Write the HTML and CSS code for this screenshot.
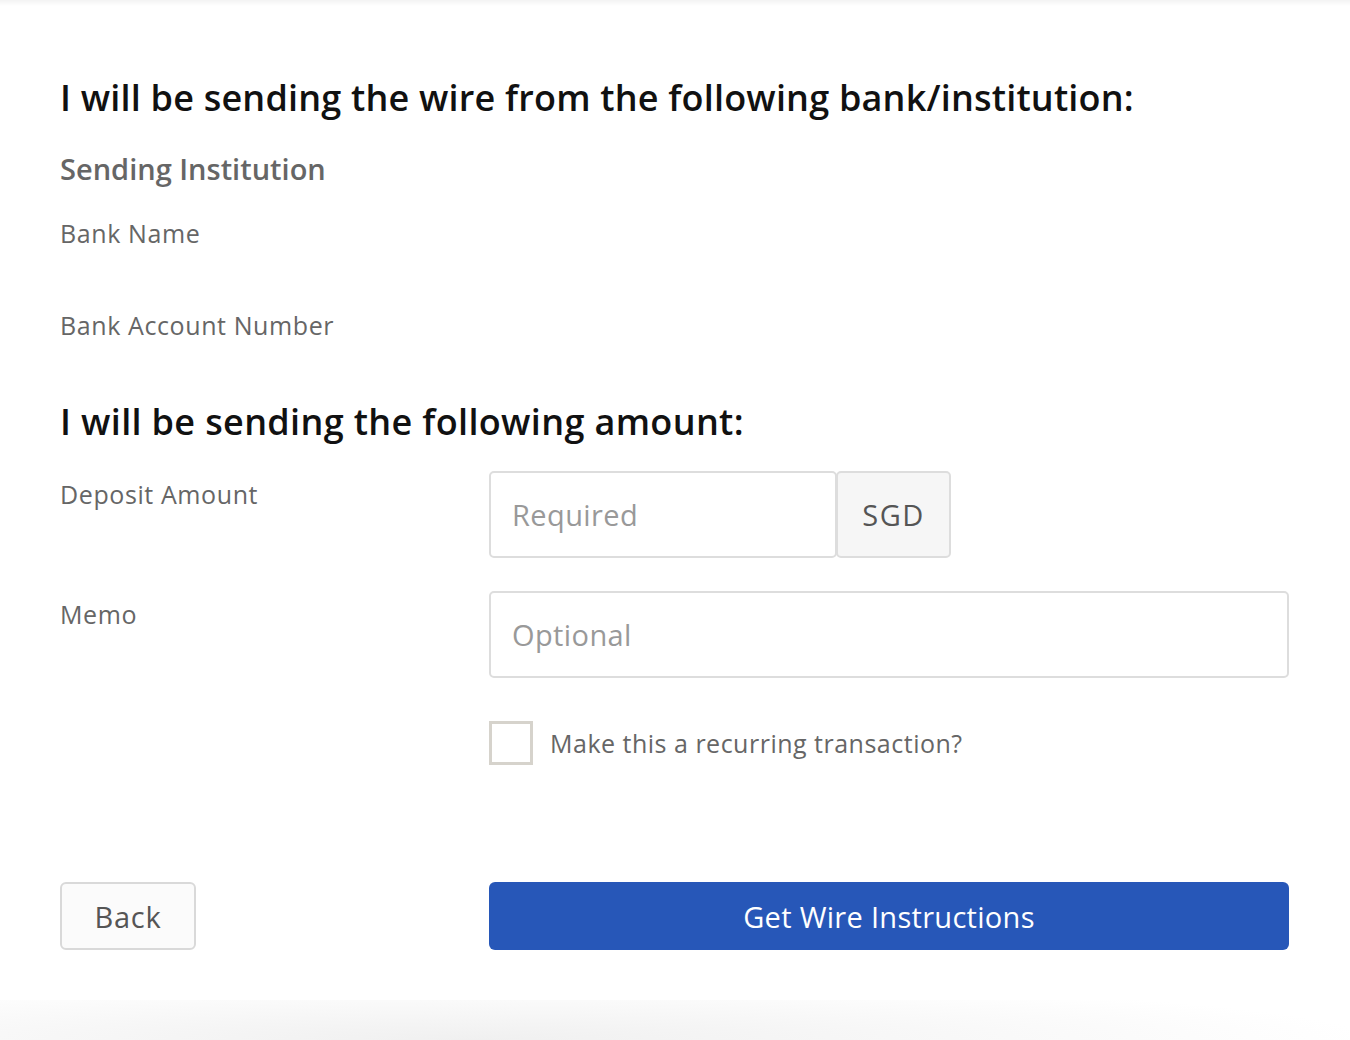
FILE: index.html
```html
<!DOCTYPE html>
<html lang="en">
<head>
<meta charset="utf-8">
<title>Wire Deposit</title>
<link rel="stylesheet" href="styles.css">
</head>
<body>
<div class="top-shade"></div>
<main class="page">
  <h2 class="section-title first">I will be sending the wire from the following bank/institution:</h2>
  <h3 class="subsection">Sending Institution</h3>
  <div class="info-row"><span class="label">Bank Name</span></div>
  <div class="info-row"><span class="label">Bank Account Number</span></div>

  <h2 class="section-title second">I will be sending the following amount:</h2>

  <div class="form-row amount-row">
    <label class="label form-label" for="amount">Deposit Amount</label>
    <div class="input-group">
      <input id="amount" class="text-input amount" type="text" placeholder="Required">
      <span class="addon">SGD</span>
    </div>
  </div>

  <div class="form-row memo-row">
    <label class="label form-label" for="memo">Memo</label>
    <input id="memo" class="text-input memo" type="text" placeholder="Optional">
  </div>

  <div class="form-row check-row">
    <span></span>
    <label class="check">
      <span class="box"></span>
      <span class="check-text">Make this a recurring transaction?</span>
    </label>
  </div>

  <div class="form-row actions">
    <div><button class="btn btn-back" type="button">Back</button></div>
    <button class="btn btn-primary" type="button">Get Wire Instructions</button>
  </div>
</main>
<div class="bottom-shade"></div>
</body>
</html>
```

FILE: styles.css
```css
html, body {
  margin: 0;
  padding: 0;
  background: #ffffff;
}
body {
  font-family: "Open Sans", "Lato", "Liberation Sans", sans-serif;
  color: #666666;
  height: 1040px;
  overflow: hidden;
  position: relative;
}
.top-shade {
  height: 6px;
  background: linear-gradient(#f3f3f3, #ffffff);
}
.page {
  width: 1229px;
  padding: 0 61px 0 60px;
}
.section-title {
  margin: 0;
  color: #111111;
  font-weight: 600;
  font-size: 36px;
  line-height: 44px;
  letter-spacing: 0.2px;
}
.section-title.first {
  padding-top: 70px;
}
.section-title.second {
  margin-top: 29px;
  letter-spacing: 0.35px;
}
.subsection {
  margin: 31px 0 0;
  font-size: 29px;
  font-weight: 600;
  line-height: 36px;
  color: #666666;
}
.info-row {
  height: 92px;
}
.label {
  display: block;
  font-size: 25px;
  line-height: 36px;
  letter-spacing: 0.6px;
  color: #666666;
}
.info-row .label {
  padding-top: 28px;
}
.form-row {
  display: grid;
  grid-template-columns: 429px 1fr;
}
.form-row.amount-row {
  margin-top: 27px;
}
.form-row.memo-row {
  margin-top: 33px;
}
.form-row.check-row {
  margin-top: 43px;
}
.form-row.actions {
  margin-top: 117px;
}
.form-label {
  padding-top: 5px;
}
.input-group {
  display: flex;
  width: 462px;
}
.text-input {
  box-sizing: border-box;
  height: 87px;
  border: 2px solid #dddddd;
  border-radius: 5px;
  padding: 0 21px;
  font-family: inherit;
  font-size: 29px;
  letter-spacing: 0.4px;
  color: #333333;
  background: #ffffff;
  outline: none;
}
.text-input::placeholder {
  color: #999999;
}
.text-input.amount {
  width: 348px;
}
.text-input.memo {
  width: 800px;
}
.addon {
  box-sizing: border-box;
  width: 115px;
  height: 87px;
  margin-left: -1px;
  border: 2px solid #dddddd;
  border-radius: 5px;
  background: #f6f6f6;
  color: #555555;
  font-size: 29px;
  letter-spacing: 1.5px;
  display: flex;
  align-items: center;
  justify-content: center;
}
.check {
  display: flex;
  align-items: center;
  gap: 17px;
}
.box {
  box-sizing: border-box;
  width: 44px;
  height: 44px;
  border: 3px solid #d6d3cc;
  background: #ffffff;
}
.check-text {
  font-size: 25px;
  letter-spacing: 0.5px;
  color: #666666;
}
.btn {
  box-sizing: border-box;
  height: 68px;
  border-radius: 6px;
  font-family: inherit;
  font-size: 29px;
  cursor: pointer;
}
.btn-back {
  width: 136px;
  border: 2px solid #d9d9d9;
  background: #fbfbfb;
  color: #555555;
  letter-spacing: 0.8px;
}
.btn-primary {
  width: 800px;
  border: none;
  background: #2757b8;
  color: #ffffff;
  letter-spacing: 0.3px;
}
.bottom-shade {
  position: absolute;
  left: 0;
  right: 0;
  bottom: 0;
  height: 40px;
  background: radial-gradient(ellipse 900px 60px at 35% 100%, #f0f0f0, rgba(255,255,255,0));
}
```
